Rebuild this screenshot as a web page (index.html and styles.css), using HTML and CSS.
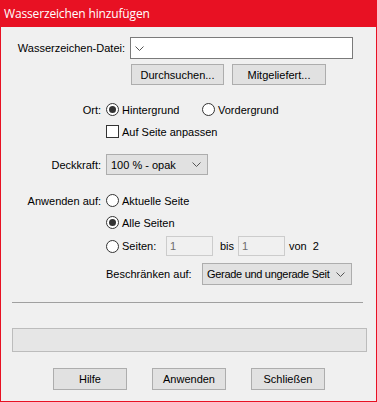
FILE: index.html
```html
<!DOCTYPE html>
<html lang="de">
<head>
  <meta charset="UTF-8">
  <title>Wasserzeichen hinzufügen</title>
  <link rel="stylesheet" href="styles.css">
</head>
<body>
  <div class="dialog">
    <div class="titlebar">Wasserzeichen hinzufügen</div>

    <div class="content">
      <div class="row file-row">
        <span class="lbl lbl-wide">Wasserzeichen-Datei:</span>
        <div class="combo">
          <svg class="chev" width="9" height="5" viewBox="0 0 9 5"><polyline points="0.5,0.5 4.5,4.5 8.5,0.5" fill="none" stroke="#555" stroke-width="1"/></svg>
        </div>
      </div>

      <div class="row browse-row">
        <button class="btn btn-browse">Durchsuchen...</button>
        <button class="btn btn-bundled">Mitgeliefert...</button>
      </div>

      <div class="row ort-row">
        <span class="lbl">Ort:</span>
        <label class="opt opt-bg"><span class="radio checked"></span>Hintergrund</label>
        <label class="opt"><span class="radio"></span>Vordergrund</label>
      </div>

      <div class="row fit-row">
        <label class="opt"><span class="check"></span>Auf Seite anpassen</label>
      </div>

      <div class="row opacity-row">
        <span class="lbl">Deckkraft:</span>
        <div class="select select-opacity">
          <span class="select-text">100 % - opak</span>
          <svg width="9" height="5" viewBox="0 0 9 5"><polyline points="0.5,0.5 4.5,4.5 8.5,0.5" fill="none" stroke="#555" stroke-width="1"/></svg>
        </div>
      </div>

      <div class="row apply-row">
        <span class="lbl">Anwenden auf:</span>
        <label class="opt"><span class="radio"></span>Aktuelle Seite</label>
      </div>

      <div class="row all-row">
        <label class="opt"><span class="radio checked"></span>Alle Seiten</label>
      </div>

      <div class="row pages-row">
        <label class="opt opt-pages"><span class="radio"></span>Seiten:</label>
        <div class="num">1</div>
        <span class="bis">bis</span>
        <div class="num">1</div>
        <span class="von">von&nbsp;&nbsp;2</span>
      </div>

      <div class="row limit-row">
        <span class="limit-lbl">Beschränken auf:</span>
        <div class="select select-limit">
          <span class="select-text tight">Gerade und ungerade Seit</span>
          <svg width="9" height="5" viewBox="0 0 9 5"><polyline points="0.5,0.5 4.5,4.5 8.5,0.5" fill="none" stroke="#555" stroke-width="1"/></svg>
        </div>
      </div>

      <div class="separator"></div>

      <div class="progress"></div>

      <div class="row actions">
        <button class="btn btn-action">Hilfe</button>
        <button class="btn btn-action">Anwenden</button>
        <button class="btn btn-action">Schließen</button>
      </div>
    </div>
  </div>
</body>
</html>
```

FILE: styles.css
```css
* {
  box-sizing: border-box;
}
body {
  margin: 0;
  font-family: 'Liberation Sans', Arial, sans-serif;
  font-size: 11px;
  color: #000;
  background: #f0f0f0;
}
.dialog {
  width: 377px;
  height: 402px;
  border: 1px solid #e81123;
  border-top: none;
  background: #f0f0f0;
  overflow: hidden;
}
.titlebar {
  height: 27px;
  margin: 0 -1px;
  padding-left: 4px;
  background: #e81123;
  color: #fff;
  font-family: 'Open Sans', 'Noto Sans', sans-serif;
  font-size: 12px;
  letter-spacing: -0.15px;
  line-height: 27px;
}
.content {
  display: flex;
  flex-direction: column;
}
.row {
  display: flex;
  align-items: center;
}
.lbl {
  width: 105px;
  padding-right: 5px;
  text-align: right;
  flex-shrink: 0;
}
.lbl-wide {
  width: 129px;
}
.file-row {
  margin-top: 10px;
  height: 22px;
}
.combo {
  width: 223px;
  height: 22px;
  background: #fff;
  border: 1px solid #7a7a7a;
  display: flex;
  align-items: center;
  padding-left: 4px;
}
.browse-row {
  margin-top: 5px;
  height: 21px;
  padding-left: 130px;
}
.btn {
  font-family: inherit;
  font-size: 11px;
  color: #000;
  background: #e1e1e1;
  border: 1px solid #adadad;
  padding: 0;
  height: 21px;
}
.btn-browse {
  width: 93px;
}
.btn-bundled {
  width: 94px;
  margin-left: 8px;
}
.opt {
  display: flex;
  align-items: center;
  gap: 3px;
  height: 13px;
}
.opt-bg {
  width: 96px;
}
.radio {
  width: 13px;
  height: 13px;
  border: 1px solid #333;
  border-radius: 50%;
  background: #fff;
  position: relative;
  flex-shrink: 0;
}
.radio.checked::after {
  content: '';
  position: absolute;
  left: 2px;
  top: 2px;
  width: 7px;
  height: 7px;
  border-radius: 50%;
  background: #333;
}
.check {
  width: 13px;
  height: 13px;
  border: 1px solid #333;
  background: #fff;
  flex-shrink: 0;
}
.ort-row {
  margin-top: 18px;
  height: 13px;
}
.fit-row {
  margin-top: 9px;
  height: 13px;
  padding-left: 105px;
}
.opacity-row {
  margin-top: 16px;
  height: 21px;
}
.select {
  height: 21px;
  background: #e1e1e1;
  border: 1px solid #adadad;
  display: flex;
  align-items: center;
  gap: 5px;
  padding: 0 6px 0 4px;
}
.select-text {
  flex: 1;
  white-space: nowrap;
}
.select-text.tight {
  letter-spacing: -0.3px;
}
.select svg {
  flex-shrink: 0;
}
.select-opacity {
  width: 102px;
}
.apply-row {
  margin-top: 19px;
  height: 13px;
}
.all-row {
  margin-top: 9px;
  height: 13px;
  padding-left: 105px;
}
.pages-row {
  margin-top: 7px;
  height: 20px;
  padding-left: 105px;
}
.opt-pages {
  width: 60px;
}
.num {
  width: 47px;
  height: 20px;
  border: 1px solid #cccccc;
  color: #6d6d6d;
  padding-left: 3px;
  line-height: 18px;
}
.bis {
  width: 25px;
  padding-left: 7px;
}
.von {
  padding-left: 4px;
}
.limit-row {
  margin-top: 7px;
  height: 22px;
  padding-left: 105px;
}
.limit-lbl {
  width: 96px;
}
.select-limit {
  width: 150px;
  height: 22px;
}
.separator {
  margin: 17px 0 0 11px;
  width: 351px;
  height: 1px;
  background: #a0a0a0;
}
.progress {
  margin: 25px 0 0 11px;
  width: 355px;
  height: 24px;
  background: #e6e6e6;
  border: 1px solid #bcbcbc;
}
.actions {
  margin-top: 16px;
  padding-left: 52px;
  gap: 25px;
}
.btn-action {
  width: 74px;
  height: 22px;
}
```
